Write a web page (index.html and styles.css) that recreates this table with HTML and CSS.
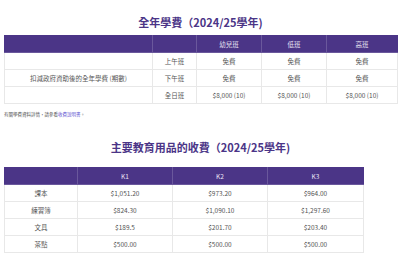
FILE: index.html
```html
<!DOCTYPE html>
<html lang="zh-Hant">
<head>
<meta charset="utf-8">
<link rel="stylesheet" href="styles.css">
</head>
<body>
<div class="page">
  <h2 class="title t1">全年學費（2024/25學年)</h2>
  <table class="fees">
    <colgroup><col class="c1"><col class="c2"><col class="c3"><col class="c4"><col class="c5"></colgroup>
    <thead>
      <tr><th></th><th></th><th>幼兒班</th><th>低班</th><th>高班</th></tr>
    </thead>
    <tbody>
      <tr><td></td><td>上午班</td><td>免費</td><td>免費</td><td>免費</td></tr>
      <tr><td>扣減政府資助後的全年學費 (期數)</td><td>下午班</td><td>免費</td><td>免費</td><td>免費</td></tr>
      <tr><td></td><td>全日班</td><td>$8,000 (10)</td><td>$8,000 (10)</td><td>$8,000 (10)</td></tr>
    </tbody>
  </table>
  <p class="note">有關學費資料詳情，請參看<a href="#">收費說明書</a>。</p>
  <h2 class="title t2">主要教育用品的收費（2024/25學年)</h2>
  <table class="items">
    <colgroup><col class="d1"><col class="d2"><col class="d3"><col class="d4"></colgroup>
    <thead>
      <tr><th></th><th>K1</th><th>K2</th><th>K3</th></tr>
    </thead>
    <tbody>
      <tr><td>課本</td><td>$1,051.20</td><td>$973.20</td><td>$964.00</td></tr>
      <tr><td>練習簿</td><td>$824.30</td><td>$1,090.10</td><td>$1,297.60</td></tr>
      <tr><td>文具</td><td>$189.5</td><td>$201.70</td><td>$203.40</td></tr>
      <tr><td>茶點</td><td>$500.00</td><td>$500.00</td><td>$500.00</td></tr>
    </tbody>
  </table>
</div>
</body>
</html>
```
FILE: styles.css
```css
html, body { margin: 0; padding: 0; background: #fff; }
body { font-family: "Noto Sans CJK TC", "Noto Sans", sans-serif; color: #555; }
.page { width: 393px; margin-left: 4px; }
.title {
  margin: 0;
  text-align: center;
  color: #4b3587;
  font-size: 11px;
  font-weight: 700;
  line-height: 14px;
}
.t1 { padding-top: 15px; padding-bottom: 6px; }
.t2 { padding-top: 0; padding-bottom: 13px; }
table { border-collapse: collapse; table-layout: fixed; }
.fees { width: 393px; }
.items { width: 359px; }
.c1 { width: 148px; } .c2 { width: 44px; } .c3 { width: 65px; } .c4 { width: 65px; } .c5 { width: 71px; }
.d1 { width: 73px; } .d2 { width: 95px; } .d3 { width: 95px; } .d4 { width: 96px; }
th, td {
  height: 16px;
  padding: 0;
  text-align: center;
  vertical-align: middle;
  font-size: 6.5px;
  line-height: 9px;
  border: 1px solid #e8e8e8;
}
th {
  background: #4b3587;
  color: #e8e4f3;
  font-weight: 400;
  border-color: #6a589c;
  border-top-color: #4b3587;
}
th:first-child { border-left-color: #4b3587; }
th:last-child { border-right-color: #4b3587; }
.note {
  margin: 0;
  padding-top: 6px;
  padding-bottom: 22px;
  font-size: 4.5px;
  line-height: 8px;
  color: #555;
}
.note a { color: #5b4fd0; text-decoration: none; }
```
